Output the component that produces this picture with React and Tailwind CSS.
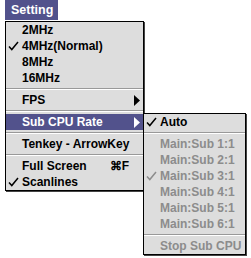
import React from 'react';

const font = { fontFamily: '"Liberation Sans", Arial, sans-serif' };

function Check({ className = '' }) {
  return (
    <svg width="11" height="10" viewBox="0 0 11 10" className={className}>
      <path d="M1 5.5 L3.8 8.5 L10 1" fill="none" stroke="currentColor" strokeWidth="1.5" />
    </svg>
  );
}

function Arrow({ white }) {
  return (
    <svg width="6" height="11" viewBox="0 0 6 11" className="absolute right-[3px] top-[3px]">
      <path d="M0 0 L6 5.5 L0 11 Z" fill={white ? '#ffffff' : '#000000'} />
    </svg>
  );
}

function Sep() {
  return (
    <div className="h-[6px] flex flex-col justify-center">
      <div className="h-px bg-[#999999]" />
      <div className="h-px bg-white" />
    </div>
  );
}

function Item({ label, checked, arrow, active, shortcut, disabled }) {
  const color = active ? 'text-white' : disabled ? 'text-[#8c8c8c]' : 'text-black';
  return (
    <div
      className={`relative h-4 flex items-center pl-4 pr-2 text-[12px] font-bold leading-none ${color} ${
        active ? 'bg-[#52528c]' : ''
      }`}
    >
      {checked && <Check className="absolute left-[2px] top-[3px]" />}
      <span className="flex-1 whitespace-nowrap">{label}</span>
      {shortcut && <span className="mr-[6px]">{shortcut}</span>}
      {arrow && <Arrow white={active} />}
    </div>
  );
}

export default function App() {
  return (
    <div className="relative w-[251px] h-[258px] bg-white overflow-hidden" style={font}>
      <div className="h-[21px] flex">
        <div className="ml-[5px] w-[53px] h-5 bg-[#52528c] text-white text-[12.5px] font-bold flex items-center pl-[6px]">
          Setting
        </div>
      </div>

      <div className="ml-[5px] w-[139px] border border-black bg-[#dddddd] shadow-[1px_1px_0_#444444]">
        <Item label="2MHz" />
        <Item label="4MHz(Normal)" checked />
        <Item label="8MHz" />
        <Item label="16MHz" />
        <Sep />
        <Item label="FPS" arrow />
        <Sep />
        <Item label="Sub CPU Rate" arrow active />
        <Sep />
        <Item label="Tenkey - ArrowKey" />
        <Sep />
        <Item label="Full Screen" shortcut="⌘F" />
        <Item label="Scanlines" checked />
      </div>

      <div className="absolute left-[143px] top-[113px] w-[103px] border border-black bg-[#dddddd] shadow-[1px_1px_0_#444444]">
        <Item label="Auto" checked />
        <Sep />
        <Item label="Main:Sub 1:1" disabled />
        <Item label="Main:Sub 2:1" disabled />
        <Item label="Main:Sub 3:1" disabled checked />
        <Item label="Main:Sub 4:1" disabled />
        <Item label="Main:Sub 5:1" disabled />
        <Item label="Main:Sub 6:1" disabled />
        <Sep />
        <Item label="Stop Sub CPU" disabled />
      </div>
    </div>
  );
}
